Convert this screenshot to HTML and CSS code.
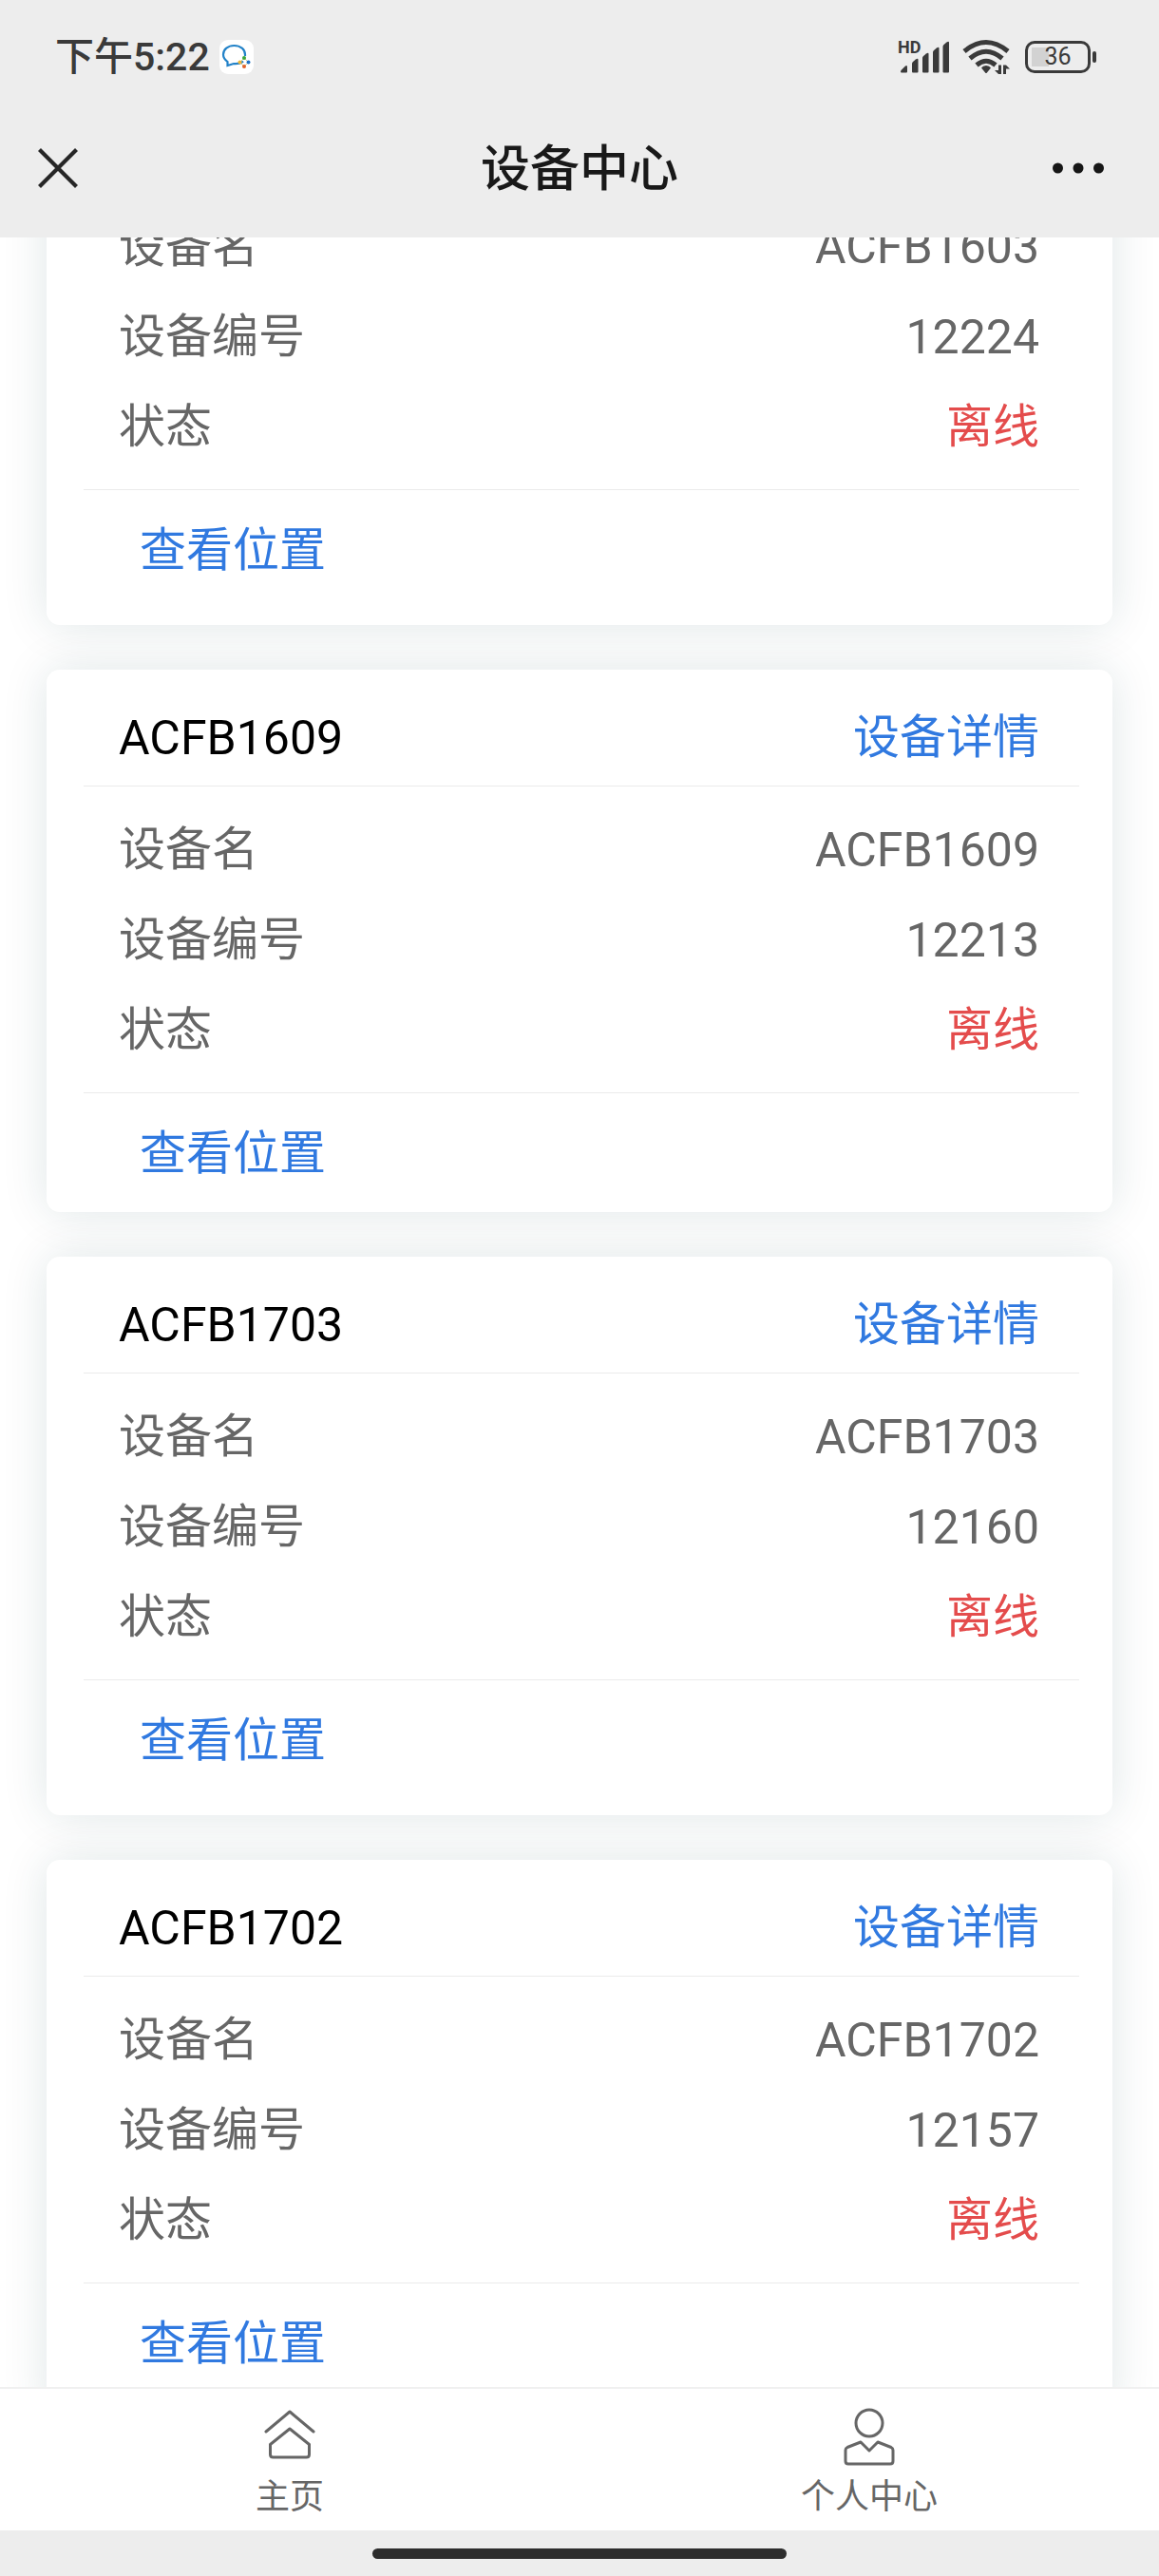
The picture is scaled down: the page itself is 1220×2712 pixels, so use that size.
FILE: index.html
```html
<!DOCTYPE html>
<html lang="zh-CN">
<head>
<meta charset="utf-8">
<meta name="viewport" content="width=device-width, initial-scale=1">
<title>设备中心</title>
<link rel="stylesheet" href="styles.css">
</head>
<body>
<header class="top">
  <div class="status">
    <span class="time">下午5:22</span>
    <svg class="app-icon" width="36" height="36" viewBox="0 0 36 36" aria-hidden="true">
      <rect width="36" height="36" rx="9" fill="#fff"/>
      <path d="M25 22.500Q22 25.500 15 25L8.500 27V23Q4 19.500 4 15.500C4 10 9 6 15.500 6S27 10 27 15.500V17" fill="none" stroke="#2282c8" stroke-width="2.200"/>
      <path d="M26 19l4.500 4.500L26 28l-4.500-4.500z" fill="none" stroke="#d9d48a" stroke-width="1"/>
      <circle cx="26" cy="19" r="2" fill="#3aa63a"/>
      <circle cx="30.500" cy="23.500" r="2" fill="#1f72c4"/>
      <circle cx="26" cy="28" r="2" fill="#e2622b"/>
      <circle cx="21.500" cy="23.500" r="2" fill="#f2b632"/>
    </svg>
    <div class="status-right">
      <div class="signal">
        <span class="hd">HD</span>
        <svg width="54" height="36" viewBox="0 0 54 36" fill="#3a3a3a" aria-hidden="true">
          <path d="M2 33.500q0-1 1-2l4-4q2-1.500 2 1v5q0 1-1 1H3q-1 0-1-1z"/>
          <path d="M14 25q0-1 1-2l3-2.500q2.500-1.500 2.500.5v12.500q0 1-1 1H15q-1 0-1-1z"/>
          <path d="M25 19q0-1 1-2l3-2.500q2.500-1.500 2.500.5v18.500q0 1-1 1H26q-1 0-1-1z"/>
          <path d="M36 13q0-1 1-2l3-2.500q2.500-1.500 2.500.5v24.500q0 1-1 1H37q-1 0-1-1z"/>
          <path d="M46.500 7q0-1 1-2l3-2.500q2.500-1.500 2.500.5v30.500q0 1-1 1h-4.500q-1 0-1-1z"/>
        </svg>
      </div>
      <svg width="50" height="38" viewBox="0 0 50 38" aria-hidden="true">
        <g fill="none" stroke="#3a3a3a" stroke-width="5">
          <path d="M2 13Q25-6 48 13"/>
          <path d="M8 20.500Q25 6 42 20.500"/>
          <path d="M15 27.500Q25 19 35 27.500"/>
        </g>
        <path d="M25 28q3.500 0 5 2.500L25.500 36h-1L20 30.500Q21.500 28 25 28z" fill="#3a3a3a"/>
        <path d="M38 37V27.500h3V37zM38 37L34 33h4zM43 37V27.500h3V37zM46 27.500l4 4h-4z" fill="#3a3a3a"/>
      </svg>
      <div class="battery">36</div>
    </div>
  </div>
  <div class="titlebar">
    <button class="icon-btn close" type="button" aria-label="关闭">
      <svg width="42" height="42" viewBox="0 0 42 42" aria-hidden="true"><path d="M1.500 1.500l39 39M40.500 1.500l-39 39" stroke="#262626" stroke-width="4.200"/></svg>
    </button>
    <h1 class="title">设备中心</h1>
    <button class="icon-btn more" type="button" aria-label="更多">
      <svg width="56" height="12" viewBox="0 0 56 12" fill="#161616" aria-hidden="true"><circle cx="6.500" cy="6" r="5.500"/><circle cx="28" cy="6" r="5.500"/><circle cx="49.500" cy="6" r="5.500"/></svg>
    </button>
  </div>
</header>

<main class="list">
  <article class="card card-scrolled card-tall">
    <dl class="fields">
      <div class="row"><dt>设备名</dt><dd class="latin">ACFB1603</dd></div>
      <div class="row"><dt>设备编号</dt><dd class="latin">12224</dd></div>
      <div class="row"><dt>状态</dt><dd class="offline">离线</dd></div>
    </dl>
    <footer class="actions"><a class="link" href="#loc-12224">查看位置</a></footer>
  </article>

  <article class="card">
    <header class="card-head"><h2 class="name latin">ACFB1609</h2><a class="link" href="#dev-12213">设备详情</a></header>
    <dl class="fields">
      <div class="row"><dt>设备名</dt><dd class="latin">ACFB1609</dd></div>
      <div class="row"><dt>设备编号</dt><dd class="latin">12213</dd></div>
      <div class="row"><dt>状态</dt><dd class="offline">离线</dd></div>
    </dl>
    <footer class="actions"><a class="link" href="#loc-12213">查看位置</a></footer>
  </article>

  <article class="card card-tall">
    <header class="card-head"><h2 class="name latin">ACFB1703</h2><a class="link" href="#dev-12160">设备详情</a></header>
    <dl class="fields">
      <div class="row"><dt>设备名</dt><dd class="latin">ACFB1703</dd></div>
      <div class="row"><dt>设备编号</dt><dd class="latin">12160</dd></div>
      <div class="row"><dt>状态</dt><dd class="offline">离线</dd></div>
    </dl>
    <footer class="actions"><a class="link" href="#loc-12160">查看位置</a></footer>
  </article>

  <article class="card card-tall">
    <header class="card-head"><h2 class="name latin">ACFB1702</h2><a class="link" href="#dev-12157">设备详情</a></header>
    <dl class="fields">
      <div class="row"><dt>设备名</dt><dd class="latin">ACFB1702</dd></div>
      <div class="row"><dt>设备编号</dt><dd class="latin">12157</dd></div>
      <div class="row"><dt>状态</dt><dd class="offline">离线</dd></div>
    </dl>
    <footer class="actions"><a class="link" href="#loc-12157">查看位置</a></footer>
  </article>
</main>

<nav class="tabs">
  <a class="tab" href="#home">
    <svg width="60" height="62" viewBox="0 0 60 62" fill="none" stroke="#666" stroke-width="3" stroke-linecap="round" stroke-linejoin="round" aria-hidden="true">
      <path d="M5 25L30 4l25 21"/>
      <path d="M30 22L9.500 38.500V49q0 3 3 3h35q3 0 3-3V38.500z"/>
    </svg>
    <span>主页</span>
  </a>
  <a class="tab" href="#me">
    <svg width="60" height="62" viewBox="0 0 60 62" fill="none" stroke="#666" stroke-width="3" stroke-linecap="round" stroke-linejoin="round" aria-hidden="true">
      <circle cx="30" cy="16" r="14"/>
      <path d="M21 36L7 41.500q-2 1-2 3V56q0 3 3 3h44q3 0 3-3V44.500q0-2-2-3L39 36l-9 9z"/>
    </svg>
    <span>个人中心</span>
  </a>
</nav>
<div class="gesture"><span class="pill"></span></div>
</body>
</html>
```
FILE: styles.css
```css
* {
  box-sizing: border-box;
}

body {
  margin: 0;
  height: 100vh;
  display: flex;
  flex-direction: column;
  background: #fff;
  color: #666;
  font: 49px/60px Roboto, "Noto Sans CJK SC", sans-serif;
}

h1, h2, dl, dd {
  margin: 0;
}

a {
  text-decoration: none;
}

svg {
  display: block;
  flex: none;
}

/* Phone status bar and page title */
.top {
  position: relative;
  z-index: 1;
  height: 250px;
  flex: none;
  background: #ededed;
}

.status {
  display: flex;
  align-items: center;
  height: 104px;
  padding: 16px 71px 0 58px;
  color: #3a3a3a;
}

.time {
  font-size: 41px;
  font-weight: 500;
}

.app-icon {
  margin-left: 10px;
}

.status-right {
  display: flex;
  align-items: center;
  gap: 13px;
  margin-left: auto;
}

.signal {
  position: relative;
}

.hd {
  position: absolute;
  left: -1px;
  top: -1px;
  font-size: 18px;
  line-height: 18px;
  font-weight: 700;
}

.battery {
  position: relative;
  width: 69px;
  height: 34px;
  margin: 0 1px 0 3px;
  border: 3px solid #3a3a3a;
  border-radius: 10px;
  background: linear-gradient(90deg, #d2d2d2 18px, #ededed 18px) 4px 4px / 54px 20px no-repeat;
  font-size: 25px;
  line-height: 28px;
  text-align: center;
}

.battery::after {
  content: "";
  position: absolute;
  left: 68px;
  top: 8px;
  width: 4px;
  height: 12px;
  border-radius: 2px;
  background: #3a3a3a;
}

.titlebar {
  display: grid;
  grid-template-columns: 1fr auto 1fr;
  align-items: center;
  height: 146px;
}

.icon-btn {
  padding: 0;
  border: 0;
  background: none;
}

.close {
  justify-self: start;
  margin-left: 40px;
}

.more {
  justify-self: end;
  margin-right: 57px;
}

.title {
  padding-top: 4px;
  color: #191919;
  font-size: 52px;
  font-weight: 500;
}

/* Device list */
.list {
  flex: 1;
  min-height: 0;
  overflow: hidden;
  display: flex;
  flex-direction: column;
  gap: 47px;
  padding: 0 49px;
}

.card {
  flex: none;
  border-radius: 14px;
  background: #fff;
  box-shadow: 0 0 47px rgba(0, 60, 70, 0.13);
}

.card-scrolled {
  margin-top: -57px;
}

.card-tall {
  padding-bottom: 17px;
}

.card-head,
.fields {
  margin: 0 35px 0 39px;
  border-bottom: 1px solid #ebebeb;
}

.card-head {
  display: flex;
  align-items: center;
  justify-content: space-between;
  height: 123px;
  padding: 22px 42px 0 37px;
}

.fields {
  padding: 19px 42px 18px 37px;
}

.row {
  display: flex;
  align-items: center;
  justify-content: space-between;
  height: 95px;
}

.latin {
  font-size: 50px;
}

.name {
  color: #000;
  font-weight: 400;
}

.link {
  color: #3079e0;
}

.offline {
  color: #e44c4c;
}

.actions {
  display: flex;
  align-items: center;
  height: 125px;
  padding: 2px 98px 0;
}

/* Bottom tab bar */
.tabs {
  flex: none;
  display: flex;
  height: 151px;
  border-top: 2px solid #f0f0f0;
  background: #fff;
}

.tab {
  flex: 1;
  display: flex;
  flex-direction: column;
  align-items: center;
  gap: 8px;
  padding-top: 20px;
  color: #666;
  font-size: 36px;
  line-height: 48px;
}

.gesture {
  flex: none;
  display: flex;
  justify-content: center;
  height: 48px;
  padding-top: 19px;
  background: #ededed;
}

.pill {
  width: 436px;
  height: 11px;
  border-radius: 6px;
  background: #2d2d2d;
}
```
